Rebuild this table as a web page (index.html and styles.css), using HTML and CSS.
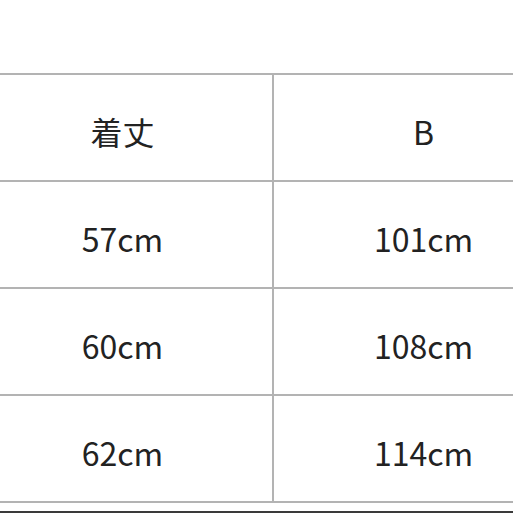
FILE: index.html
```html
<!DOCTYPE html>
<html lang="ja">
<head>
<meta charset="utf-8">
<link rel="stylesheet" href="styles.css">
</head>
<body>
<div class="page">
  <table class="size-table">
    <tbody>
      <tr><td>着丈</td><td>B</td></tr>
      <tr><td>57cm</td><td>101cm</td></tr>
      <tr><td>60cm</td><td>108cm</td></tr>
      <tr><td>62cm</td><td>114cm</td></tr>
    </tbody>
  </table>
  <div class="edge"></div>
</div>
</body>
</html>
```
FILE: styles.css
```css
html, body {
  margin: 0;
  padding: 0;
  background: #ffffff;
}
.page {
  width: 513px;
  height: 513px;
  overflow: hidden;
  position: relative;
}
.size-table {
  margin-top: 73px;
  margin-left: -29px;
  width: 604px;
  table-layout: fixed;
  border-collapse: collapse;
  font-family: "Noto Sans CJK JP", "Noto Sans", sans-serif;
  font-size: 32px;
  color: #222222;
}
.size-table td {
  width: 50%;
  height: 105px;
  padding: 6px 0 0 0;
  box-sizing: border-box;
  border: 2px solid #b3b3b3;
  text-align: center;
  vertical-align: middle;
  line-height: 1;
}
.size-table tr td {
  height: 107px;
}
.edge {
  position: absolute;
  left: 0;
  right: 0;
  bottom: 0;
  height: 2px;
  background: #3a3a3a;
}
```
